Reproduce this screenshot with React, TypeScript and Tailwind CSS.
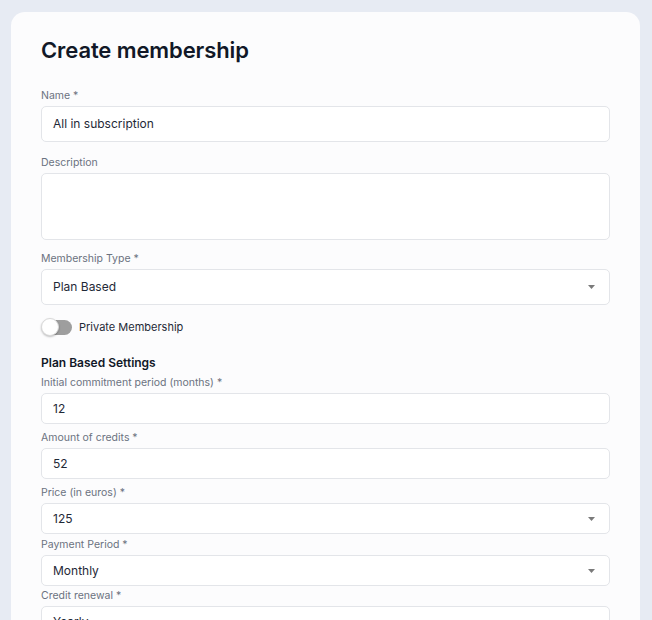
import React from "react";

const Caret = () => (
  <svg width="7" height="4" viewBox="0 0 7 4" className="shrink-0">
    <path d="M0 0 L7 0 L3.5 4 Z" fill="#7a7a7a" />
  </svg>
);

interface FieldProps {
  label: string;
  value?: string;
  select?: boolean;
  tall?: boolean;
  compact?: boolean;
  className?: string;
}

const Field = ({ label, value, select, tall, compact, className = "" }: FieldProps) => (
  <div className={`flex flex-col ${className}`}>
    <label className="text-[10.5px] leading-4 text-[#6b7280] mb-[2px]">{label}</label>
    <div
      className={`flex justify-between bg-white border border-[#e3e5e9] rounded-[5px] pl-[11px] pr-[14px] ${
        tall ? "h-[67px] items-start" : compact ? "h-[31px] items-center" : "h-[36px] items-center"
      }`}
    >
      <span className="text-[12px] text-[#1f2937]">{value}</span>
      {select && <Caret />}
    </div>
  </div>
);

export default function App() {
  return (
    <div className="h-[620px] overflow-hidden bg-[#e7ebf3] pl-[11px] pr-[12px] pt-[12px] font-['Inter',sans-serif]">
      <div className="bg-[#fcfcfd] rounded-t-[14px] px-[30px] pt-[22px] pb-10 min-h-[700px]">
        <h1 className="text-[22px] leading-8 font-semibold text-[#111827] tracking-[-0.1px]">
          Create membership
        </h1>

        <div className="mt-[22px] flex flex-col gap-[12px]">
          <Field label="Name *" value="All in subscription" />
          <Field label="Description" tall className="mt-[1px]" />
          <Field label="Membership Type *" value="Plan Based" select className="mt-[-1px]" />
        </div>

        <div className="mt-[13px] flex items-center gap-[7px] h-[18px]">
          <div className="relative w-[31px] h-[18px] flex items-center">
            <div className="absolute left-[3px] right-0 h-[15px] rounded-full bg-[#9e9e9e]" />
            <div className="absolute left-0 w-[18px] h-[18px] rounded-full bg-white border border-[#d9d9d9] shadow-[0_1px_2px_rgba(0,0,0,0.25)]" />
          </div>
          <span className="text-[11px] text-[#1f2937]">Private Membership</span>
        </div>

        <h2 className="mt-[17px] text-[12px] leading-5 font-semibold text-[#111827]">
          Plan Based Settings
        </h2>

        <div className="mt-[2px] flex flex-col">
          <Field label="Initial commitment period (months) *" value="12" compact />
          <Field label="Amount of credits *" value="52" compact className="mt-[6px]" />
          <Field label="Price (in euros) *" value="125" select compact className="mt-[6px]" />
          <Field label="Payment Period *" value="Monthly" select compact className="mt-[3px]" />
          <Field label="Credit renewal *" value="Yearly" select compact className="mt-[2px]" />
        </div>
      </div>
    </div>
  );
}
